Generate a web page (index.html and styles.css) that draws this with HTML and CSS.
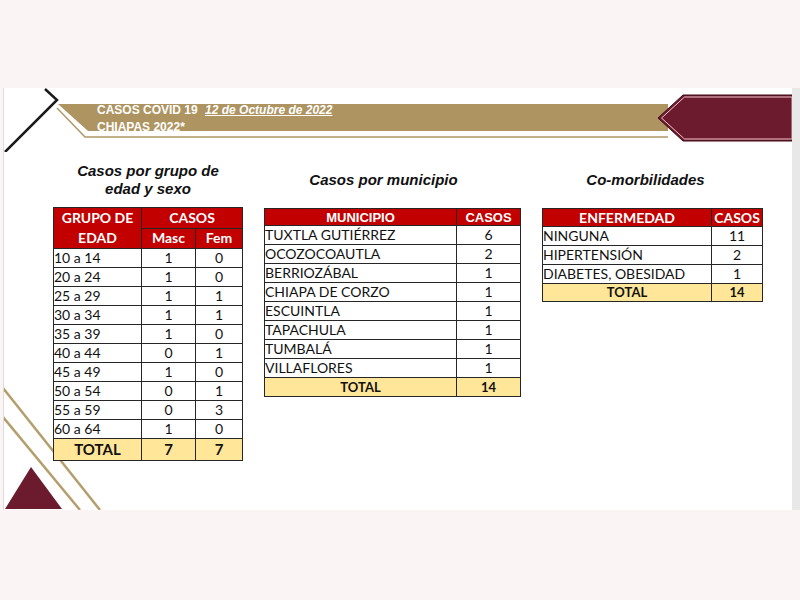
FILE: index.html
```html
<!DOCTYPE html>
<html lang="es">
<head>
<meta charset="utf-8">
<title>Casos COVID 19 Chiapas</title>
<link rel="stylesheet" href="styles.css">
</head>
<body>
<div class="slide">
  <div class="banner">
    <svg class="banner-art" width="788" height="64" viewBox="0 0 788 64">
      <polyline points="41,1 53,12 1,64" fill="none" stroke="#1b1b1b" stroke-width="2.5"/>
      <polygon points="54,16 664,16 664,43 84,43" fill="#ad9461"/>
      <polyline points="53,20 81,49 664,49" fill="none" stroke="#b09866" stroke-width="1.5"/>
      <polygon points="654,30 679,7 788,7 788,53 679,53" fill="#6c1b2e" stroke="#3b0b15" stroke-width="1"/>
      <polygon points="657.5,30 680.5,9 788,9 788,51 680.5,51" fill="none" stroke="#f2c5cd" stroke-width="1"/>
    </svg>
    <div class="banner-text">
      <div>CASOS COVID 19 <span class="date">12 de Octubre de 2022</span></div>
      <div>CHIAPAS 2022*</div>
    </div>
  </div>

  <svg class="corner-art" width="110" height="140" viewBox="0 0 110 140">
    <line x1="-1" y1="18" x2="96" y2="140" stroke="#b49e6c" stroke-width="2.5"/>
    <line x1="-1" y1="47" x2="76" y2="140" stroke="#b49e6c" stroke-width="2.5"/>
    <polygon points="27,97 1,139 58,139" fill="#6c1b2e"/>
  </svg>

  <div class="content">
    <section class="col">
      <h2 class="title">Casos por grupo de<br>edad y sexo</h2>
      <table class="tbl tbl-age">
        <colgroup><col class="c-age"><col class="c-m"><col class="c-f"></colgroup>
        <tr class="hrow">
          <th rowspan="2" class="h-grupo">GRUPO DE<br>EDAD</th>
          <th colspan="2">CASOS</th>
        </tr>
        <tr class="hrow">
          <th>Masc</th>
          <th>Fem</th>
        </tr>
        <tr><td class="lbl">10 a 14</td><td class="num">1</td><td class="num">0</td></tr>
        <tr><td class="lbl">20 a 24</td><td class="num">1</td><td class="num">0</td></tr>
        <tr><td class="lbl">25 a 29</td><td class="num">1</td><td class="num">1</td></tr>
        <tr><td class="lbl">30 a 34</td><td class="num">1</td><td class="num">1</td></tr>
        <tr><td class="lbl">35 a 39</td><td class="num">1</td><td class="num">0</td></tr>
        <tr><td class="lbl">40 a 44</td><td class="num">0</td><td class="num">1</td></tr>
        <tr><td class="lbl">45 a 49</td><td class="num">1</td><td class="num">0</td></tr>
        <tr><td class="lbl">50 a 54</td><td class="num">0</td><td class="num">1</td></tr>
        <tr><td class="lbl">55 a 59</td><td class="num">0</td><td class="num">3</td></tr>
        <tr><td class="lbl">60 a 64</td><td class="num">1</td><td class="num">0</td></tr>
        <tr class="total total-big"><td>TOTAL</td><td>7</td><td>7</td></tr>
      </table>
    </section>

    <section class="col">
      <h2 class="title title-mun">Casos por municipio</h2>
      <table class="tbl tbl-mun">
        <colgroup><col class="c-mun"><col class="c-casos"></colgroup>
        <tr class="hrow hrow-mun"><th>MUNICIPIO</th><th>CASOS</th></tr>
        <tr><td class="lbl">TUXTLA GUTIÉRREZ</td><td class="num">6</td></tr>
        <tr><td class="lbl">OCOZOCOAUTLA</td><td class="num">2</td></tr>
        <tr><td class="lbl">BERRIOZÁBAL</td><td class="num">1</td></tr>
        <tr><td class="lbl">CHIAPA DE CORZO</td><td class="num">1</td></tr>
        <tr><td class="lbl">ESCUINTLA</td><td class="num">1</td></tr>
        <tr><td class="lbl">TAPACHULA</td><td class="num">1</td></tr>
        <tr><td class="lbl">TUMBALÁ</td><td class="num">1</td></tr>
        <tr><td class="lbl">VILLAFLORES</td><td class="num">1</td></tr>
        <tr class="total"><td>TOTAL</td><td>14</td></tr>
      </table>
    </section>

    <section class="col">
      <h2 class="title title-com">Co-morbilidades</h2>
      <table class="tbl tbl-com">
        <colgroup><col class="c-enf"><col class="c-casos2"></colgroup>
        <tr class="hrow hrow-com"><th>ENFERMEDAD</th><th>CASOS</th></tr>
        <tr><td class="lbl">NINGUNA</td><td class="num">11</td></tr>
        <tr><td class="lbl">HIPERTENSIÓN</td><td class="num">2</td></tr>
        <tr><td class="lbl">DIABETES, OBESIDAD</td><td class="num">1</td></tr>
        <tr class="total total-com"><td>TOTAL</td><td>14</td></tr>
      </table>
    </section>
  </div>
</div>
</body>
</html>
```

FILE: styles.css
```css
html, body {
  margin: 0;
  padding: 0;
}

body {
  background: #fbf4f5;
  width: 800px;
  height: 600px;
  overflow: hidden;
}

.slide {
  margin-top: 88px;
  margin-left: 3px;
  width: 788px;
  height: 422px;
  background: #ffffff;
  border-left: 1px solid #dcdcdc;
  border-right: 8px solid #e8e8e8;
  position: relative;
  overflow: hidden;
}

.banner {
  position: relative;
  height: 64px;
}

.banner-art {
  display: block;
}

.banner-text {
  position: absolute;
  left: 93px;
  top: 14px;
  color: #ffffff;
  font: bold 12px/17px "Liberation Sans", Arial, sans-serif;
}

.date {
  font-style: italic;
  text-decoration: underline;
  margin-left: 4px;
}

.corner-art {
  position: absolute;
  left: 0;
  bottom: 0;
  display: block;
}

.content {
  position: relative;
  z-index: 1;
  display: flex;
  align-items: flex-start;
  gap: 21px;
  padding: 5px 0 0 49px;
}

.col {
  display: flex;
  flex-direction: column;
}

.title {
  height: 45px;
  margin: 0 0 5px 0;
  display: flex;
  align-items: center;
  justify-content: center;
  text-align: center;
  font: italic bold 15px/18px "Liberation Sans", Arial, sans-serif;
  color: #111111;
}

.title-mun {
  padding-right: 18px;
  margin-bottom: 6px;
}

.title-com {
  padding-right: 14px;
  margin-bottom: 6px;
}

.tbl {
  border-collapse: collapse;
  table-layout: fixed;
  background: #ffffff;
  font-family: Lato, "Open Sans", sans-serif;
  font-size: 14px;
  color: #111111;
}

.tbl td,
.tbl th {
  border: 1px solid #262626;
  padding: 0;
  line-height: 1;
  height: 18px;
}

.tbl th {
  background: #c20000;
  color: #ffffff;
  font-weight: bold;
  text-align: center;
}

.tbl-age { width: 189px; }
.c-age { width: 88px; }
.c-m { width: 54px; }
.c-f { width: 47px; }

.tbl-age .hrow th {
  height: 19px;
}

.tbl .h-grupo {
  line-height: 20px;
}

.tbl-mun { width: 256px; }
.c-mun { width: 192px; }
.c-casos { width: 64px; }

.tbl .hrow-mun th {
  height: 16px;
  font-family: "Liberation Sans", Arial, sans-serif;
  font-size: 13px;
}

.tbl-com { width: 220px; }
.c-enf { width: 169px; }
.c-casos2 { width: 51px; }

.tbl .hrow-com th {
  height: 17px;
}

.lbl {
  text-align: left;
  padding-left: 1px;
}

.num {
  text-align: center;
}

.tbl .total td {
  background: #ffe699;
  font-weight: bold;
  text-align: center;
  font-size: 13px;
}

.tbl .total-big td {
  height: 21px;
  font-size: 15px;
}

.tbl .total-com td {
  height: 17px;
}
```
